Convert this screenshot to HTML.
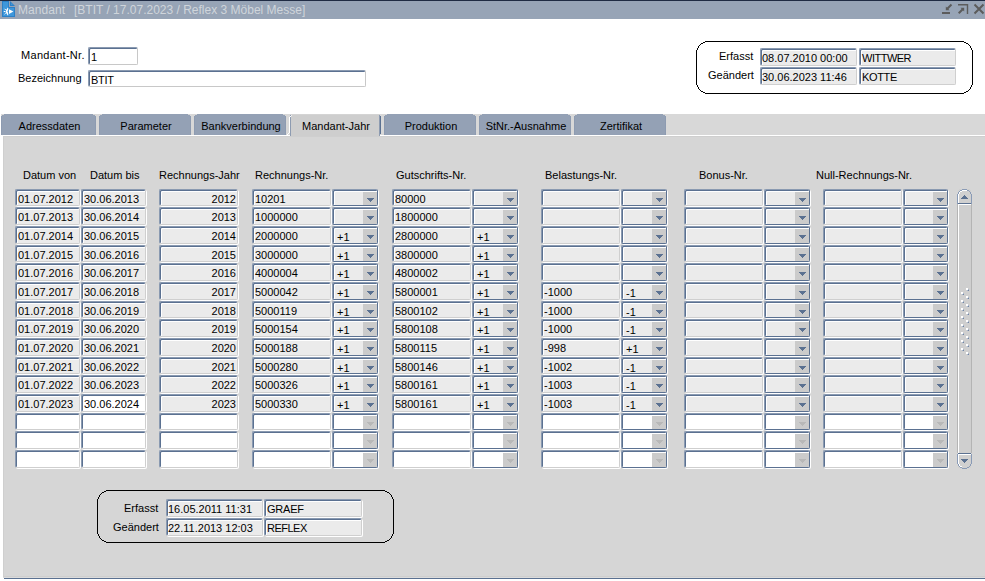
<!DOCTYPE html>
<html><head><meta charset="utf-8">
<style>
*{margin:0;padding:0;box-sizing:border-box}
html,body{width:985px;height:581px;overflow:hidden;background:#fff}
body{position:relative;font-family:"Liberation Sans",sans-serif;font-size:11px;color:#000}
.a{position:absolute;white-space:nowrap}
#top{position:absolute;left:0;top:0;width:985px;height:1px;background:#1f2b43}
#tb{position:absolute;left:0;top:1px;width:985px;height:18px;background:#97a4b6}
.tt{position:absolute;left:18px;top:3px;font-size:12px;line-height:14px;letter-spacing:0.08px;color:#cfd5db;white-space:pre}
.lbl{position:absolute;white-space:nowrap;line-height:13px}
.tf{position:absolute;height:18px;background:#fff;border-top:1px solid #8a9ab1;border-left:1px solid #8a9ab1;border-right:1px solid #c8c8c8;border-bottom:1px solid #c8c8c8;border-radius:2px;box-shadow:inset 1px 1px 0 #5b7191}
.tf span{position:absolute;left:2px;top:3px;line-height:13px}
.box{position:absolute;border:1px solid #000;border-radius:10px}
#canvas{position:absolute;left:2px;top:135px;width:983px;height:443px;background:#d6d6d6;border-top:1px solid #fff;border-left:1px solid #fff;box-shadow:inset 1px 1px 0 #cfcfcf}
#bline{position:absolute;left:4px;top:578px;width:981px;height:1px;background:#5b7191}
#bsh{position:absolute;left:3px;top:576px;width:982px;height:2px;background:linear-gradient(#cecece 50%,#dcdcdc 50%)}
.strip{position:absolute;left:1px;top:114px;width:984px;height:21px;background:#d8d8d8}
.tab{position:absolute;top:114px;height:21px;background:#94a1b5;text-align:center;line-height:13px;padding-top:6px;padding-left:2px;clip-path:polygon(3px 0,calc(100% - 3px) 0,calc(100% - 3px) 1px,calc(100% - 1px) 1px,calc(100% - 1px) 2px,100% 2px,100% 100%,0 100%,0 2px,1px 2px,1px 1px,3px 1px);box-shadow:inset 1px 0 0 #8d9bb1,inset -1px 0 0 #8d9bb1}
.tab.sel{background:#cecece;height:22px;clip-path:none;border-top:1px solid #d4d4d4;padding-top:5px}
.px{position:absolute}
.f{position:absolute;height:17px;background:#ebebeb;border-top:1px solid #8a9ab1;border-left:1px solid #8a9ab1;border-right:1px solid #cfcfcf;border-bottom:1px solid #cfcfcf;border-radius:2px;box-shadow:1px 1px 0 #fff,inset 1px 1px 0 #5b7191,inset 2px 2px 0 #fff}
.f.w{background:#fff}
.f span{position:absolute;left:2px;top:3px;line-height:12px;white-space:nowrap}
.f.r span{left:auto;right:1px}
.bx{box-shadow:inset 1px 1px 0 #5b7191,inset 2px 2px 0 #fff !important;height:18px !important}
.bx span,.bb span{left:1px}
.bx.u span,.bb.u span{left:2px}
.d{position:absolute;height:17px;background:#ebebeb;border-top:1px solid #8a9ab1;border-left:1px solid #8a9ab1;border-right:1px solid #5b7191;border-bottom:1px solid #5b7191;border-radius:2px;box-shadow:1px 1px 0 #fff,inset 1px 1px 0 #5b7191,inset 2px 2px 0 #fff}
.d.w{background:#fff}
.d span{position:absolute;left:4px;top:4px;line-height:12px;white-space:nowrap}
.d i{position:absolute;right:0;top:2px;width:14px;bottom:0;background:#cbcbcb}
.d i::after{content:"";position:absolute;left:4px;top:6px;width:7px;height:4px;background:linear-gradient(#5b7191,#5b7191) 0 0/7px 1px no-repeat,linear-gradient(#5b7191,#5b7191) 1px 1px/5px 1px no-repeat,linear-gradient(#5b7191,#5b7191) 2px 2px/3px 1px no-repeat,linear-gradient(#5b7191,#5b7191) 3px 3px/1px 1px no-repeat}
.d.w i::after{background:linear-gradient(#b8b8b8,#b8b8b8) 0 0/7px 1px no-repeat,linear-gradient(#b8b8b8,#b8b8b8) 1px 1px/5px 1px no-repeat,linear-gradient(#b8b8b8,#b8b8b8) 2px 2px/3px 1px no-repeat,linear-gradient(#b8b8b8,#b8b8b8) 3px 3px/1px 1px no-repeat}
.hd{position:absolute;top:169px;line-height:13px;white-space:nowrap}
</style></head><body>
<div id="top"></div>
<div id="tb"></div>
<svg style="position:absolute;left:0;top:0" width="18" height="19" viewBox="0 0 18 19">
<path d="M2 1H9V7H15V17H2Z" fill="#2d80c6"/>
<path d="M3 2H8V8H14V16H3Z" fill="#3e97db"/>
<path d="M10 1L15 6H10Z" fill="#2d80c6"/>
<path d="M11 3L13 5H11Z" fill="#3e97db"/>
<path d="M9 9.2L13.4 11.6L9 14Z" fill="#fff"/>
<path d="M8 8.6A3 3 0 0 0 8 14.4V12.4A1 1 0 0 1 8 10.6Z" fill="#fff"/>
<rect x="7.2" y="7.8" width="1" height="1.6" fill="#fff"/><rect x="7.2" y="13.6" width="1" height="1.6" fill="#fff"/>
<rect x="3.8" y="11" width="1.6" height="1" fill="#fff"/>
<path d="M4.6 8.8L5.8 10M4.6 14.2L5.8 13" stroke="#fff" stroke-width="1"/>
</svg>
<div class="tt">Mandant</div><div class="tt" style="left:74px;letter-spacing:0px">[BTIT / 17.07.2023 / Reflex 3 Möbel Messe]</div>
<svg style="position:absolute;left:940px;top:3px" width="45" height="13" viewBox="0 0 45 13">
<g fill="#5c5c5c">
<rect x="2" y="9" width="8" height="2"/>
<path d="M5.8 3.4V7.2H9.6Z"/>
<rect x="26.8" y="1" width="1.4" height="10"/>
<rect x="18" y="1" width="10" height="1.5"/>
<path d="M20.4 4.8H24.2V8.6Z"/>
</g>
<g stroke="#5c5c5c" stroke-width="2" fill="none">
<path d="M11.5 1.5L7 6"/>
<path d="M18.7 10.3L23 6"/>
<path d="M34.5 1.5L43.5 10.5M43.5 1.5L34.5 10.5"/>
</g></svg>

<div class="lbl" style="left:21px;top:49px;letter-spacing:0.3px">Mandant-Nr.</div>
<div class="tf" style="left:88px;top:47px;width:50px"><span>1</span></div>
<div class="lbl" style="left:18px;top:72px">Bezeichnung</div>
<div class="tf" style="left:88px;top:70px;width:278px;height:17px"><span style="letter-spacing:-0.3px">BTIT</span></div>

<svg style="position:absolute;left:696px;top:41px" width="277" height="53" shape-rendering="crispEdges"><rect x="0.5" y="0.5" width="276" height="52" rx="12" ry="12" fill="none" stroke="#000" stroke-width="1"/></svg>
<div class="lbl" style="left:719px;top:50px">Erfasst</div>
<div class="lbl" style="left:708px;top:69px">Geändert</div>
<div class="f bx" style="left:760px;top:48px;width:97px"><span>08.07.2010 00:00</span></div>
<div class="f bx u" style="left:859px;top:48px;width:97px"><span style="letter-spacing:-0.5px">WITTWER</span></div>
<div class="f bx" style="left:760px;top:67px;width:97px"><span>30.06.2023 11:46</span></div>
<div class="f bx u" style="left:859px;top:67px;width:97px"><span style="letter-spacing:-0.35px">KOTTE</span></div>

<div class="strip"></div>
<div id="canvas"></div>
<div id="bsh"></div><div id="bline"></div>
<div class="tab" style="left:1px;width:95px">Adressdaten</div>
<div class="tab" style="left:99px;width:92px">Parameter</div>
<div class="tab" style="left:194px;width:92px">Bankverbindung</div>
<div class="tab sel" style="left:290px;width:90px;">Mandant-Jahr</div>
<div class="px" style="left:289px;top:117px;width:1px;height:16px;background:#fff"></div>
<div class="px" style="left:290px;top:116px;width:1px;height:1px;background:#fff"></div>
<div class="px" style="left:291px;top:115px;width:1px;height:1px;background:#f0f0f0"></div>
<div class="px" style="left:288px;top:133px;width:1px;height:1px;background:#fff"></div>
<div class="px" style="left:287px;top:134px;width:1px;height:1px;background:#fff"></div>
<div class="px" style="left:380px;top:116px;width:1px;height:18px;background:#5b7191"></div>
<div class="px" style="left:379px;top:115px;width:1px;height:1px;background:#8a9ab1"></div>
<div class="tab" style="left:384px;width:92px">Produktion</div>
<div class="tab" style="left:479px;width:92px">StNr.-Ausnahme</div>
<div class="tab" style="left:574px;width:92px">Zertifikat</div>

<div class="hd" style="left:23px">Datum von</div>
<div class="hd" style="left:90px">Datum bis</div>
<div class="hd" style="left:159px">Rechnungs-Jahr</div>
<div class="hd" style="left:255px">Rechnungs-Nr.</div>
<div class="hd" style="left:396px">Gutschrifts-Nr.</div>
<div class="hd" style="left:545px">Belastungs-Nr.</div>
<div class="hd" style="left:699px">Bonus-Nr.</div>
<div class="hd" style="left:816px">Null-Rechnungs-Nr.</div>

<div class="f" style="left:15px;top:189px;width:65px;height:17px"><span>01.07.2012</span></div>
<div class="f" style="left:81px;top:189px;width:65px;height:17px"><span>30.06.2013</span></div>
<div class="f r" style="left:159px;top:189px;width:79px;height:17px"><span>2012</span></div>
<div class="f" style="left:252px;top:189px;width:79px;height:17px"><span>10201</span></div>
<div class="d" style="left:332px;top:189px;width:46px;height:17px"><span></span><i></i></div>
<div class="f" style="left:392px;top:189px;width:79px;height:17px"><span>80000</span></div>
<div class="d" style="left:472px;top:189px;width:46px;height:17px"><span></span><i></i></div>
<div class="f" style="left:541px;top:189px;width:79px;height:17px"><span></span></div>
<div class="d" style="left:621px;top:189px;width:46px;height:17px"><span></span><i></i></div>
<div class="f" style="left:684px;top:189px;width:79px;height:17px"><span></span></div>
<div class="d" style="left:764px;top:189px;width:46px;height:17px"><span></span><i></i></div>
<div class="f" style="left:823px;top:189px;width:79px;height:17px"><span></span></div>
<div class="d" style="left:903px;top:189px;width:45px;height:17px"><span></span><i></i></div>
<div class="f" style="left:15px;top:207px;width:65px;height:18px"><span>01.07.2013</span></div>
<div class="f" style="left:81px;top:207px;width:65px;height:18px"><span>30.06.2014</span></div>
<div class="f r" style="left:159px;top:207px;width:79px;height:18px"><span>2013</span></div>
<div class="f" style="left:252px;top:207px;width:79px;height:18px"><span>1000000</span></div>
<div class="d" style="left:332px;top:207px;width:46px;height:18px"><span></span><i></i></div>
<div class="f" style="left:392px;top:207px;width:79px;height:18px"><span>1800000</span></div>
<div class="d" style="left:472px;top:207px;width:46px;height:18px"><span></span><i></i></div>
<div class="f" style="left:541px;top:207px;width:79px;height:18px"><span></span></div>
<div class="d" style="left:621px;top:207px;width:46px;height:18px"><span></span><i></i></div>
<div class="f" style="left:684px;top:207px;width:79px;height:18px"><span></span></div>
<div class="d" style="left:764px;top:207px;width:46px;height:18px"><span></span><i></i></div>
<div class="f" style="left:823px;top:207px;width:79px;height:18px"><span></span></div>
<div class="d" style="left:903px;top:207px;width:45px;height:18px"><span></span><i></i></div>
<div class="f" style="left:15px;top:226px;width:65px;height:18px"><span>01.07.2014</span></div>
<div class="f" style="left:81px;top:226px;width:65px;height:18px"><span>30.06.2015</span></div>
<div class="f r" style="left:159px;top:226px;width:79px;height:18px"><span>2014</span></div>
<div class="f" style="left:252px;top:226px;width:79px;height:18px"><span>2000000</span></div>
<div class="d" style="left:332px;top:226px;width:46px;height:18px"><span>+1</span><i></i></div>
<div class="f" style="left:392px;top:226px;width:79px;height:18px"><span>2800000</span></div>
<div class="d" style="left:472px;top:226px;width:46px;height:18px"><span>+1</span><i></i></div>
<div class="f" style="left:541px;top:226px;width:79px;height:18px"><span></span></div>
<div class="d" style="left:621px;top:226px;width:46px;height:18px"><span></span><i></i></div>
<div class="f" style="left:684px;top:226px;width:79px;height:18px"><span></span></div>
<div class="d" style="left:764px;top:226px;width:46px;height:18px"><span></span><i></i></div>
<div class="f" style="left:823px;top:226px;width:79px;height:18px"><span></span></div>
<div class="d" style="left:903px;top:226px;width:45px;height:18px"><span></span><i></i></div>
<div class="f" style="left:15px;top:245px;width:65px;height:17px"><span>01.07.2015</span></div>
<div class="f" style="left:81px;top:245px;width:65px;height:17px"><span>30.06.2016</span></div>
<div class="f r" style="left:159px;top:245px;width:79px;height:17px"><span>2015</span></div>
<div class="f" style="left:252px;top:245px;width:79px;height:17px"><span>3000000</span></div>
<div class="d" style="left:332px;top:245px;width:46px;height:17px"><span>+1</span><i></i></div>
<div class="f" style="left:392px;top:245px;width:79px;height:17px"><span>3800000</span></div>
<div class="d" style="left:472px;top:245px;width:46px;height:17px"><span>+1</span><i></i></div>
<div class="f" style="left:541px;top:245px;width:79px;height:17px"><span></span></div>
<div class="d" style="left:621px;top:245px;width:46px;height:17px"><span></span><i></i></div>
<div class="f" style="left:684px;top:245px;width:79px;height:17px"><span></span></div>
<div class="d" style="left:764px;top:245px;width:46px;height:17px"><span></span><i></i></div>
<div class="f" style="left:823px;top:245px;width:79px;height:17px"><span></span></div>
<div class="d" style="left:903px;top:245px;width:45px;height:17px"><span></span><i></i></div>
<div class="f" style="left:15px;top:263px;width:65px;height:18px"><span>01.07.2016</span></div>
<div class="f" style="left:81px;top:263px;width:65px;height:18px"><span>30.06.2017</span></div>
<div class="f r" style="left:159px;top:263px;width:79px;height:18px"><span>2016</span></div>
<div class="f" style="left:252px;top:263px;width:79px;height:18px"><span>4000004</span></div>
<div class="d" style="left:332px;top:263px;width:46px;height:18px"><span>+1</span><i></i></div>
<div class="f" style="left:392px;top:263px;width:79px;height:18px"><span>4800002</span></div>
<div class="d" style="left:472px;top:263px;width:46px;height:18px"><span>+1</span><i></i></div>
<div class="f" style="left:541px;top:263px;width:79px;height:18px"><span></span></div>
<div class="d" style="left:621px;top:263px;width:46px;height:18px"><span></span><i></i></div>
<div class="f" style="left:684px;top:263px;width:79px;height:18px"><span></span></div>
<div class="d" style="left:764px;top:263px;width:46px;height:18px"><span></span><i></i></div>
<div class="f" style="left:823px;top:263px;width:79px;height:18px"><span></span></div>
<div class="d" style="left:903px;top:263px;width:45px;height:18px"><span></span><i></i></div>
<div class="f" style="left:15px;top:282px;width:65px;height:18px"><span>01.07.2017</span></div>
<div class="f" style="left:81px;top:282px;width:65px;height:18px"><span>30.06.2018</span></div>
<div class="f r" style="left:159px;top:282px;width:79px;height:18px"><span>2017</span></div>
<div class="f" style="left:252px;top:282px;width:79px;height:18px"><span>5000042</span></div>
<div class="d" style="left:332px;top:282px;width:46px;height:18px"><span>+1</span><i></i></div>
<div class="f" style="left:392px;top:282px;width:79px;height:18px"><span>5800001</span></div>
<div class="d" style="left:472px;top:282px;width:46px;height:18px"><span>+1</span><i></i></div>
<div class="f" style="left:541px;top:282px;width:79px;height:18px"><span>-1000</span></div>
<div class="d" style="left:621px;top:282px;width:46px;height:18px"><span>-1</span><i></i></div>
<div class="f" style="left:684px;top:282px;width:79px;height:18px"><span></span></div>
<div class="d" style="left:764px;top:282px;width:46px;height:18px"><span></span><i></i></div>
<div class="f" style="left:823px;top:282px;width:79px;height:18px"><span></span></div>
<div class="d" style="left:903px;top:282px;width:45px;height:18px"><span></span><i></i></div>
<div class="f" style="left:15px;top:301px;width:65px;height:17px"><span>01.07.2018</span></div>
<div class="f" style="left:81px;top:301px;width:65px;height:17px"><span>30.06.2019</span></div>
<div class="f r" style="left:159px;top:301px;width:79px;height:17px"><span>2018</span></div>
<div class="f" style="left:252px;top:301px;width:79px;height:17px"><span>5000119</span></div>
<div class="d" style="left:332px;top:301px;width:46px;height:17px"><span>+1</span><i></i></div>
<div class="f" style="left:392px;top:301px;width:79px;height:17px"><span>5800102</span></div>
<div class="d" style="left:472px;top:301px;width:46px;height:17px"><span>+1</span><i></i></div>
<div class="f" style="left:541px;top:301px;width:79px;height:17px"><span>-1000</span></div>
<div class="d" style="left:621px;top:301px;width:46px;height:17px"><span>-1</span><i></i></div>
<div class="f" style="left:684px;top:301px;width:79px;height:17px"><span></span></div>
<div class="d" style="left:764px;top:301px;width:46px;height:17px"><span></span><i></i></div>
<div class="f" style="left:823px;top:301px;width:79px;height:17px"><span></span></div>
<div class="d" style="left:903px;top:301px;width:45px;height:17px"><span></span><i></i></div>
<div class="f" style="left:15px;top:319px;width:65px;height:18px"><span>01.07.2019</span></div>
<div class="f" style="left:81px;top:319px;width:65px;height:18px"><span>30.06.2020</span></div>
<div class="f r" style="left:159px;top:319px;width:79px;height:18px"><span>2019</span></div>
<div class="f" style="left:252px;top:319px;width:79px;height:18px"><span>5000154</span></div>
<div class="d" style="left:332px;top:319px;width:46px;height:18px"><span>+1</span><i></i></div>
<div class="f" style="left:392px;top:319px;width:79px;height:18px"><span>5800108</span></div>
<div class="d" style="left:472px;top:319px;width:46px;height:18px"><span>+1</span><i></i></div>
<div class="f" style="left:541px;top:319px;width:79px;height:18px"><span>-1000</span></div>
<div class="d" style="left:621px;top:319px;width:46px;height:18px"><span>-1</span><i></i></div>
<div class="f" style="left:684px;top:319px;width:79px;height:18px"><span></span></div>
<div class="d" style="left:764px;top:319px;width:46px;height:18px"><span></span><i></i></div>
<div class="f" style="left:823px;top:319px;width:79px;height:18px"><span></span></div>
<div class="d" style="left:903px;top:319px;width:45px;height:18px"><span></span><i></i></div>
<div class="f" style="left:15px;top:338px;width:65px;height:18px"><span>01.07.2020</span></div>
<div class="f" style="left:81px;top:338px;width:65px;height:18px"><span>30.06.2021</span></div>
<div class="f r" style="left:159px;top:338px;width:79px;height:18px"><span>2020</span></div>
<div class="f" style="left:252px;top:338px;width:79px;height:18px"><span>5000188</span></div>
<div class="d" style="left:332px;top:338px;width:46px;height:18px"><span>+1</span><i></i></div>
<div class="f" style="left:392px;top:338px;width:79px;height:18px"><span>5800115</span></div>
<div class="d" style="left:472px;top:338px;width:46px;height:18px"><span>+1</span><i></i></div>
<div class="f" style="left:541px;top:338px;width:79px;height:18px"><span>-998</span></div>
<div class="d" style="left:621px;top:338px;width:46px;height:18px"><span>+1</span><i></i></div>
<div class="f" style="left:684px;top:338px;width:79px;height:18px"><span></span></div>
<div class="d" style="left:764px;top:338px;width:46px;height:18px"><span></span><i></i></div>
<div class="f" style="left:823px;top:338px;width:79px;height:18px"><span></span></div>
<div class="d" style="left:903px;top:338px;width:45px;height:18px"><span></span><i></i></div>
<div class="f" style="left:15px;top:357px;width:65px;height:17px"><span>01.07.2021</span></div>
<div class="f" style="left:81px;top:357px;width:65px;height:17px"><span>30.06.2022</span></div>
<div class="f r" style="left:159px;top:357px;width:79px;height:17px"><span>2021</span></div>
<div class="f" style="left:252px;top:357px;width:79px;height:17px"><span>5000280</span></div>
<div class="d" style="left:332px;top:357px;width:46px;height:17px"><span>+1</span><i></i></div>
<div class="f" style="left:392px;top:357px;width:79px;height:17px"><span>5800146</span></div>
<div class="d" style="left:472px;top:357px;width:46px;height:17px"><span>+1</span><i></i></div>
<div class="f" style="left:541px;top:357px;width:79px;height:17px"><span>-1002</span></div>
<div class="d" style="left:621px;top:357px;width:46px;height:17px"><span>-1</span><i></i></div>
<div class="f" style="left:684px;top:357px;width:79px;height:17px"><span></span></div>
<div class="d" style="left:764px;top:357px;width:46px;height:17px"><span></span><i></i></div>
<div class="f" style="left:823px;top:357px;width:79px;height:17px"><span></span></div>
<div class="d" style="left:903px;top:357px;width:45px;height:17px"><span></span><i></i></div>
<div class="f" style="left:15px;top:375px;width:65px;height:18px"><span>01.07.2022</span></div>
<div class="f" style="left:81px;top:375px;width:65px;height:18px"><span>30.06.2023</span></div>
<div class="f r" style="left:159px;top:375px;width:79px;height:18px"><span>2022</span></div>
<div class="f" style="left:252px;top:375px;width:79px;height:18px"><span>5000326</span></div>
<div class="d" style="left:332px;top:375px;width:46px;height:18px"><span>+1</span><i></i></div>
<div class="f" style="left:392px;top:375px;width:79px;height:18px"><span>5800161</span></div>
<div class="d" style="left:472px;top:375px;width:46px;height:18px"><span>+1</span><i></i></div>
<div class="f" style="left:541px;top:375px;width:79px;height:18px"><span>-1003</span></div>
<div class="d" style="left:621px;top:375px;width:46px;height:18px"><span>-1</span><i></i></div>
<div class="f" style="left:684px;top:375px;width:79px;height:18px"><span></span></div>
<div class="d" style="left:764px;top:375px;width:46px;height:18px"><span></span><i></i></div>
<div class="f" style="left:823px;top:375px;width:79px;height:18px"><span></span></div>
<div class="d" style="left:903px;top:375px;width:45px;height:18px"><span></span><i></i></div>
<div class="f" style="left:15px;top:394px;width:65px;height:18px"><span>01.07.2023</span></div>
<div class="f w" style="left:81px;top:394px;width:65px;height:18px"><span>30.06.2024</span></div>
<div class="f r" style="left:159px;top:394px;width:79px;height:18px"><span>2023</span></div>
<div class="f" style="left:252px;top:394px;width:79px;height:18px"><span>5000330</span></div>
<div class="d" style="left:332px;top:394px;width:46px;height:18px"><span>+1</span><i></i></div>
<div class="f" style="left:392px;top:394px;width:79px;height:18px"><span>5800161</span></div>
<div class="d" style="left:472px;top:394px;width:46px;height:18px"><span>+1</span><i></i></div>
<div class="f" style="left:541px;top:394px;width:79px;height:18px"><span>-1003</span></div>
<div class="d" style="left:621px;top:394px;width:46px;height:18px"><span>-1</span><i></i></div>
<div class="f" style="left:684px;top:394px;width:79px;height:18px"><span></span></div>
<div class="d" style="left:764px;top:394px;width:46px;height:18px"><span></span><i></i></div>
<div class="f" style="left:823px;top:394px;width:79px;height:18px"><span></span></div>
<div class="d" style="left:903px;top:394px;width:45px;height:18px"><span></span><i></i></div>
<div class="f w" style="left:15px;top:413px;width:65px;height:17px"><span></span></div>
<div class="f w" style="left:81px;top:413px;width:65px;height:17px"><span></span></div>
<div class="f w r" style="left:159px;top:413px;width:79px;height:17px"><span></span></div>
<div class="f w" style="left:252px;top:413px;width:79px;height:17px"><span></span></div>
<div class="d w" style="left:332px;top:413px;width:46px;height:17px"><span></span><i></i></div>
<div class="f w" style="left:392px;top:413px;width:79px;height:17px"><span></span></div>
<div class="d w" style="left:472px;top:413px;width:46px;height:17px"><span></span><i></i></div>
<div class="f w" style="left:541px;top:413px;width:79px;height:17px"><span></span></div>
<div class="d w" style="left:621px;top:413px;width:46px;height:17px"><span></span><i></i></div>
<div class="f w" style="left:684px;top:413px;width:79px;height:17px"><span></span></div>
<div class="d w" style="left:764px;top:413px;width:46px;height:17px"><span></span><i></i></div>
<div class="f w" style="left:823px;top:413px;width:79px;height:17px"><span></span></div>
<div class="d w" style="left:903px;top:413px;width:45px;height:17px"><span></span><i></i></div>
<div class="f w" style="left:15px;top:431px;width:65px;height:18px"><span></span></div>
<div class="f w" style="left:81px;top:431px;width:65px;height:18px"><span></span></div>
<div class="f w r" style="left:159px;top:431px;width:79px;height:18px"><span></span></div>
<div class="f w" style="left:252px;top:431px;width:79px;height:18px"><span></span></div>
<div class="d w" style="left:332px;top:431px;width:46px;height:18px"><span></span><i></i></div>
<div class="f w" style="left:392px;top:431px;width:79px;height:18px"><span></span></div>
<div class="d w" style="left:472px;top:431px;width:46px;height:18px"><span></span><i></i></div>
<div class="f w" style="left:541px;top:431px;width:79px;height:18px"><span></span></div>
<div class="d w" style="left:621px;top:431px;width:46px;height:18px"><span></span><i></i></div>
<div class="f w" style="left:684px;top:431px;width:79px;height:18px"><span></span></div>
<div class="d w" style="left:764px;top:431px;width:46px;height:18px"><span></span><i></i></div>
<div class="f w" style="left:823px;top:431px;width:79px;height:18px"><span></span></div>
<div class="d w" style="left:903px;top:431px;width:45px;height:18px"><span></span><i></i></div>
<div class="f w" style="left:15px;top:450px;width:65px;height:18px"><span></span></div>
<div class="f w" style="left:81px;top:450px;width:65px;height:18px"><span></span></div>
<div class="f w r" style="left:159px;top:450px;width:79px;height:18px"><span></span></div>
<div class="f w" style="left:252px;top:450px;width:79px;height:18px"><span></span></div>
<div class="d w" style="left:332px;top:450px;width:46px;height:18px"><span></span><i></i></div>
<div class="f w" style="left:392px;top:450px;width:79px;height:18px"><span></span></div>
<div class="d w" style="left:472px;top:450px;width:46px;height:18px"><span></span><i></i></div>
<div class="f w" style="left:541px;top:450px;width:79px;height:18px"><span></span></div>
<div class="d w" style="left:621px;top:450px;width:46px;height:18px"><span></span><i></i></div>
<div class="f w" style="left:684px;top:450px;width:79px;height:18px"><span></span></div>
<div class="d w" style="left:764px;top:450px;width:46px;height:18px"><span></span><i></i></div>
<div class="f w" style="left:823px;top:450px;width:79px;height:18px"><span></span></div>
<div class="d w" style="left:903px;top:450px;width:45px;height:18px"><span></span><i></i></div>

<svg style="position:absolute;left:957px;top:189px" width="15" height="280" viewBox="0 0 15 280" shape-rendering="crispEdges"><rect x="1" y="1" width="13" height="14" fill="#d0d0d0"/><rect x="2" y="0" width="11" height="2" fill="#d0d0d0"/><rect x="1" y="265" width="13" height="14" fill="#d0d0d0"/><rect x="2" y="277" width="11" height="2" fill="#d0d0d0"/><rect x="0" y="15" width="1" height="249" fill="#b4b4b4"/><rect x="14" y="15" width="1" height="249" fill="#b4b4b4"/><rect x="1" y="15" width="1" height="249" fill="#fff"/><rect x="2" y="16" width="12" height="248" fill="#cfcfcf"/><rect x="1" y="15" width="13" height="1" fill="#fff"/><rect x="5" y="0" width="5" height="1" fill="#8a9bb6"/><rect x="3" y="1" width="2" height="1" fill="#8a9bb6"/><rect x="10" y="1" width="2" height="1" fill="#8a9bb6"/><rect x="2" y="2" width="1" height="1" fill="#8a9bb6"/><rect x="12" y="2" width="1" height="1" fill="#8a9bb6"/><rect x="1" y="3" width="1" height="2" fill="#8a9bb6"/><rect x="13" y="3" width="1" height="2" fill="#8a9bb6"/><rect x="0" y="5" width="1" height="10" fill="#8a9bb6"/><rect x="14" y="5" width="1" height="10" fill="#8a9bb6"/><rect x="5" y="1" width="5" height="1" fill="#fff"/><rect x="3" y="2" width="2" height="1" fill="#fff"/><rect x="2" y="3" width="1" height="2" fill="#fff"/><rect x="1" y="5" width="1" height="9" fill="#fff"/><rect x="1" y="14" width="13" height="1" fill="#5b7191"/><rect x="1" y="264" width="13" height="1" fill="#5b7191"/><rect x="1" y="265" width="13" height="1" fill="#fff"/><rect x="0" y="265" width="1" height="10" fill="#8a9bb6"/><rect x="14" y="265" width="1" height="10" fill="#8a9bb6"/><rect x="1" y="275" width="1" height="2" fill="#8a9bb6"/><rect x="13" y="275" width="1" height="2" fill="#8a9bb6"/><rect x="2" y="277" width="1" height="1" fill="#8a9bb6"/><rect x="12" y="277" width="1" height="1" fill="#8a9bb6"/><rect x="3" y="278" width="2" height="1" fill="#8a9bb6"/><rect x="10" y="278" width="2" height="1" fill="#8a9bb6"/><rect x="5" y="279" width="5" height="1" fill="#8a9bb6"/><rect x="1" y="266" width="1" height="9" fill="#fff"/><rect x="2" y="275" width="1" height="2" fill="#fff"/><rect x="3" y="277" width="2" height="1" fill="#fff"/><rect x="7" y="6" width="1" height="1" fill="#5b7191"/><rect x="4" y="270" width="7" height="1" fill="#5b7191"/><rect x="6" y="7" width="3" height="1" fill="#5b7191"/><rect x="5" y="271" width="5" height="1" fill="#5b7191"/><rect x="5" y="8" width="5" height="1" fill="#5b7191"/><rect x="6" y="272" width="3" height="1" fill="#5b7191"/><rect x="4" y="9" width="7" height="1" fill="#5b7191"/><rect x="7" y="273" width="1" height="1" fill="#5b7191"/><rect x="9" y="99" width="2" height="2" fill="#fff"/><rect x="11" y="100" width="1" height="1" fill="#a9b5c8"/><rect x="10" y="101" width="1" height="1" fill="#a9b5c8"/><rect x="11" y="101" width="1" height="1" fill="#7085a4"/><rect x="9" y="107" width="2" height="2" fill="#fff"/><rect x="11" y="108" width="1" height="1" fill="#a9b5c8"/><rect x="10" y="109" width="1" height="1" fill="#a9b5c8"/><rect x="11" y="109" width="1" height="1" fill="#7085a4"/><rect x="9" y="115" width="2" height="2" fill="#fff"/><rect x="11" y="116" width="1" height="1" fill="#a9b5c8"/><rect x="10" y="117" width="1" height="1" fill="#a9b5c8"/><rect x="11" y="117" width="1" height="1" fill="#7085a4"/><rect x="9" y="123" width="2" height="2" fill="#fff"/><rect x="11" y="124" width="1" height="1" fill="#a9b5c8"/><rect x="10" y="125" width="1" height="1" fill="#a9b5c8"/><rect x="11" y="125" width="1" height="1" fill="#7085a4"/><rect x="9" y="131" width="2" height="2" fill="#fff"/><rect x="11" y="132" width="1" height="1" fill="#a9b5c8"/><rect x="10" y="133" width="1" height="1" fill="#a9b5c8"/><rect x="11" y="133" width="1" height="1" fill="#7085a4"/><rect x="9" y="139" width="2" height="2" fill="#fff"/><rect x="11" y="140" width="1" height="1" fill="#a9b5c8"/><rect x="10" y="141" width="1" height="1" fill="#a9b5c8"/><rect x="11" y="141" width="1" height="1" fill="#7085a4"/><rect x="9" y="147" width="2" height="2" fill="#fff"/><rect x="11" y="148" width="1" height="1" fill="#a9b5c8"/><rect x="10" y="149" width="1" height="1" fill="#a9b5c8"/><rect x="11" y="149" width="1" height="1" fill="#7085a4"/><rect x="9" y="155" width="2" height="2" fill="#fff"/><rect x="11" y="156" width="1" height="1" fill="#a9b5c8"/><rect x="10" y="157" width="1" height="1" fill="#a9b5c8"/><rect x="11" y="157" width="1" height="1" fill="#7085a4"/><rect x="9" y="163" width="2" height="2" fill="#fff"/><rect x="11" y="164" width="1" height="1" fill="#a9b5c8"/><rect x="10" y="165" width="1" height="1" fill="#a9b5c8"/><rect x="11" y="165" width="1" height="1" fill="#7085a4"/><rect x="4" y="103" width="2" height="2" fill="#fff"/><rect x="6" y="104" width="1" height="1" fill="#a9b5c8"/><rect x="5" y="105" width="1" height="1" fill="#a9b5c8"/><rect x="6" y="105" width="1" height="1" fill="#7085a4"/><rect x="4" y="111" width="2" height="2" fill="#fff"/><rect x="6" y="112" width="1" height="1" fill="#a9b5c8"/><rect x="5" y="113" width="1" height="1" fill="#a9b5c8"/><rect x="6" y="113" width="1" height="1" fill="#7085a4"/><rect x="4" y="119" width="2" height="2" fill="#fff"/><rect x="6" y="120" width="1" height="1" fill="#a9b5c8"/><rect x="5" y="121" width="1" height="1" fill="#a9b5c8"/><rect x="6" y="121" width="1" height="1" fill="#7085a4"/><rect x="4" y="127" width="2" height="2" fill="#fff"/><rect x="6" y="128" width="1" height="1" fill="#a9b5c8"/><rect x="5" y="129" width="1" height="1" fill="#a9b5c8"/><rect x="6" y="129" width="1" height="1" fill="#7085a4"/><rect x="4" y="135" width="2" height="2" fill="#fff"/><rect x="6" y="136" width="1" height="1" fill="#a9b5c8"/><rect x="5" y="137" width="1" height="1" fill="#a9b5c8"/><rect x="6" y="137" width="1" height="1" fill="#7085a4"/><rect x="4" y="143" width="2" height="2" fill="#fff"/><rect x="6" y="144" width="1" height="1" fill="#a9b5c8"/><rect x="5" y="145" width="1" height="1" fill="#a9b5c8"/><rect x="6" y="145" width="1" height="1" fill="#7085a4"/><rect x="4" y="151" width="2" height="2" fill="#fff"/><rect x="6" y="152" width="1" height="1" fill="#a9b5c8"/><rect x="5" y="153" width="1" height="1" fill="#a9b5c8"/><rect x="6" y="153" width="1" height="1" fill="#7085a4"/><rect x="4" y="159" width="2" height="2" fill="#fff"/><rect x="6" y="160" width="1" height="1" fill="#a9b5c8"/><rect x="5" y="161" width="1" height="1" fill="#a9b5c8"/><rect x="6" y="161" width="1" height="1" fill="#7085a4"/></svg>

<svg style="position:absolute;left:97px;top:490px" width="297" height="53" shape-rendering="crispEdges"><rect x="0.5" y="0.5" width="296" height="52" rx="12" ry="12" fill="none" stroke="#000" stroke-width="1"/></svg>
<div class="lbl" style="left:124px;top:502px">Erfasst</div>
<div class="lbl" style="left:113px;top:521px">Geändert</div>
<div class="f bb" style="left:166px;top:499px;width:97px;height:18px"><span>16.05.2011 11:31</span></div>
<div class="f bb u" style="left:264px;top:499px;width:98px;height:18px"><span style="letter-spacing:-0.2px">GRAEF</span></div>
<div class="f bb" style="left:166px;top:518px;width:97px;height:18px"><span>22.11.2013 12:03</span></div>
<div class="f bb u" style="left:264px;top:518px;width:98px;height:18px"><span style="letter-spacing:-0.5px">REFLEX</span></div>
</body></html>
